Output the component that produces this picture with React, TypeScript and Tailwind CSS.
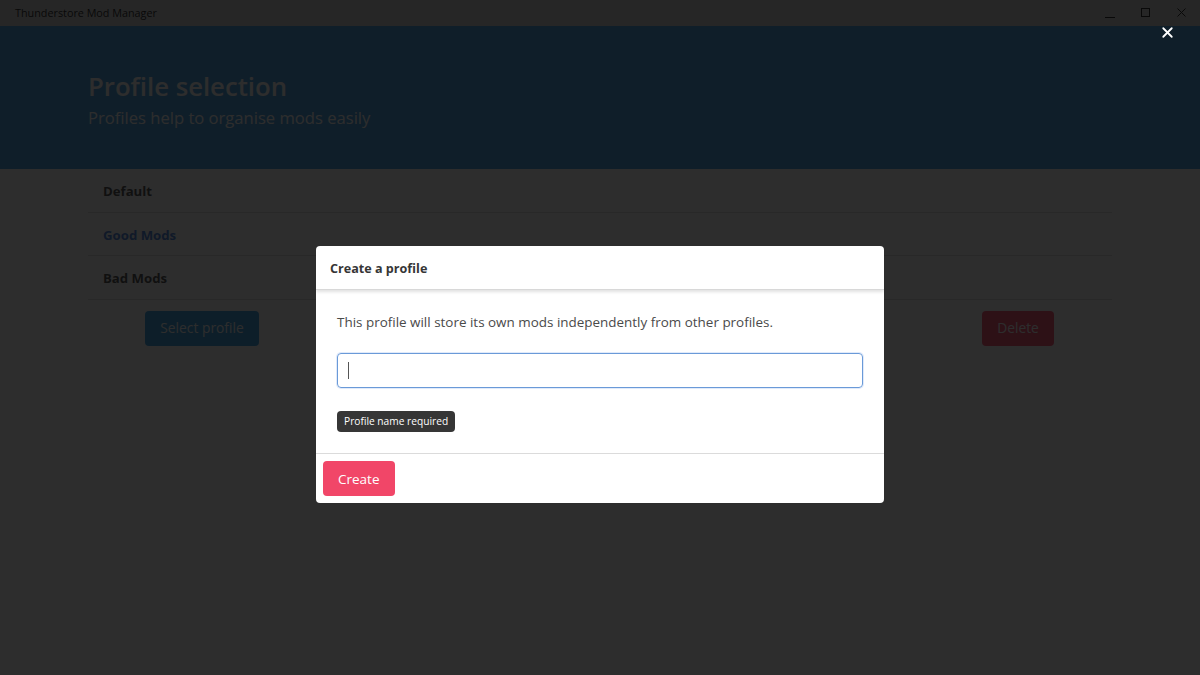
import { X } from 'lucide-react'

const profiles = [
  { name: "Default", active: false },
  { name: "Good Mods", active: true },
  { name: "Bad Mods", active: false },
]

// only the outer two buttons show past the modal
const actions = [
  { label: "Select profile", color: "bg-[#1f93e0]" },
  { label: "", color: "" },
  { label: "", color: "" },
  { label: "", color: "" },
  { label: "Delete", color: "bg-[#ff3860]" },
]

function TitleBar() {
  return (
    <div className="h-[26px] bg-[#cfcfcf] flex items-center justify-between pl-[15px] text-[10.8px] text-black">
      <span>Thunderstore Mod Manager</span>
      <div className="flex h-full">
        <div className="w-[36px] flex items-center justify-center">
          <svg width="10" height="10" viewBox="0 0 10 10"><path d="M0 9.5h10" stroke="#000" strokeWidth="1" /></svg>
        </div>
        <div className="w-[36px] flex items-center justify-center">
          <svg width="10" height="10" viewBox="0 0 10 10"><rect x="0.5" y="0.5" width="8" height="8" fill="none" stroke="#000" strokeWidth="1" /></svg>
        </div>
        <div className="w-[36px] flex items-center justify-center">
          <svg width="10" height="10" viewBox="0 0 10 10"><path d="M0.5 0.5l8 8M8.5 0.5l-8 8" stroke="#000" strokeWidth="1" /></svg>
        </div>
      </div>
    </div>
  )
}

export default function App() {
  return (
    <div className="relative w-[1200px] h-[675px] overflow-hidden bg-white font-['Open_Sans',sans-serif]">
      <TitleBar />

      {/* Hero */}
      <section className="h-[143px] bg-[#2f95e0] text-white">
        <div className="pl-[88px] pt-[43px]">
          <h1 className="text-[25.7px] font-semibold leading-[36px]">Profile selection</h1>
          <p className="text-[16.6px] leading-[22px] mt-[2px]">Profiles help to organise mods easily</p>
        </div>
      </section>

      {/* Profile list */}
      <div className="w-[1024px] ml-[88px]">
        {profiles.map((p) => (
          <div key={p.name} className="h-[43.5px] border-b border-[#dbdbdb] flex items-center pl-[15px] pt-[4px]">
            <span className={`text-[13.2px] font-bold ${p.active ? 'text-[#3273dc]' : 'text-[#363636]'}`}>{p.name}</span>
          </div>
        ))}
      </div>

      <div className="grid grid-cols-5 w-[1020px] ml-[100px] mt-[11px] h-[35px]">
        {actions.map((a, i) => (
          <div key={i} className="flex justify-center">
            {a.label && (
              <button className={`${a.color} text-white text-[13.8px] h-[35px] px-[15px] rounded-[4px]`}>{a.label}</button>
            )}
          </div>
        ))}
      </div>

      {/* Modal */}
      <div className="absolute inset-0 bg-[rgba(10,10,10,0.86)]">
        <button className="absolute left-[1159px] top-[24px] text-white">
          <X size={17} strokeWidth={2.5} />
        </button>

        <div className="absolute left-[316px] top-[246px] w-[568px] bg-white rounded-[4px] overflow-hidden">
          <header className="h-[44px] flex items-center pl-[14px] pt-[4px] border-b border-[#d8d8d8] shadow-[0_2px_3px_rgba(0,0,0,0.12)] relative">
            <span className="text-[12.6px] font-bold text-[#363636]">Create a profile</span>
          </header>
          <div className="px-[21px] pt-[21px] pb-[21px]">
            <p className="text-[13.45px] text-[#4a4a4a] leading-[22px]">
              This profile will store its own mods independently from other profiles.
            </p>
            <div className="mt-[20px] h-[35px] border border-[#6a9ad8] rounded-[4px] shadow-[0_0_0_1px_rgba(50,115,220,0.15)] flex items-center pl-[10px]">
              <span className="w-[1px] h-[17px] bg-[#555]" />
            </div>
            <div className="mt-[23px] inline-flex h-[21px] items-center px-[7px] rounded-[4px] bg-[#363636] text-white text-[10.2px]">
              Profile name required
            </div>
          </div>
          <footer className="border-t border-[#dbdbdb] pl-[7px] pt-[7px] pb-[7px]">
            <button className="h-[35px] px-[15px] pt-[1px] rounded-[4px] bg-[#f14668] text-white text-[13.5px]">Create</button>
          </footer>
        </div>
      </div>
    </div>
  )
}
